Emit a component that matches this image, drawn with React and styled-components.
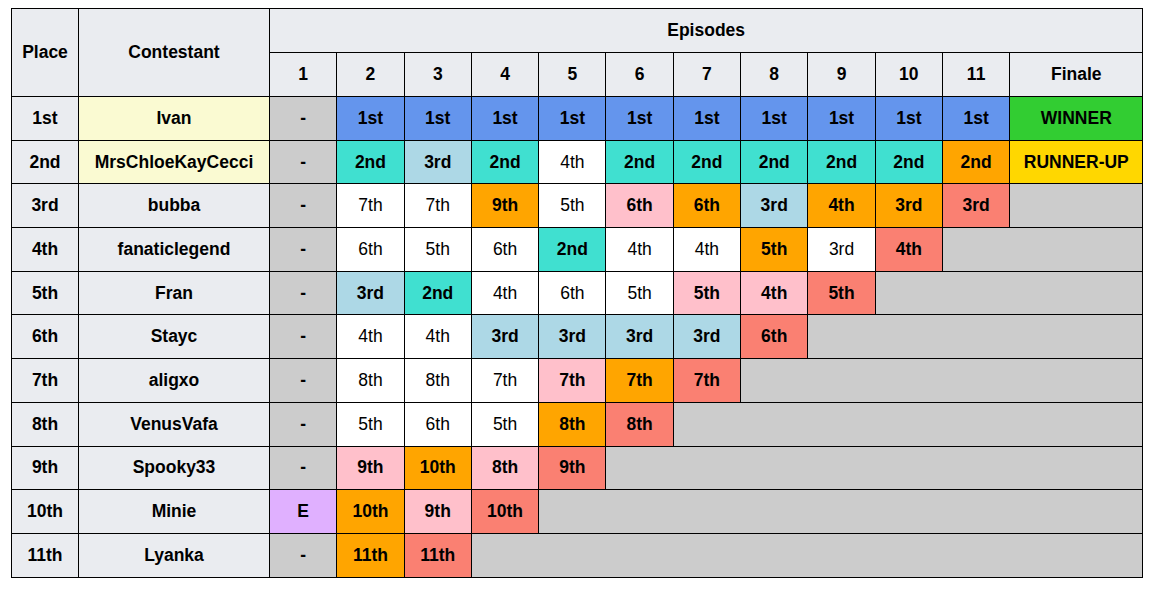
import React from 'react'
import styled, { createGlobalStyle } from 'styled-components'

const colors = {
  H: '#eaecf0',
  G: '#cccccc',
  B: '#6495ed',
  T: '#40e0d0',
  L: '#add8e6',
  O: '#ffa500',
  P: '#ffc0cb',
  S: '#fa8072',
  W: '#ffffff',
  Y: '#fafad2',
  M: '#e0b0ff',
  WIN: '#32cd32',
  RU: '#ffd700'
}

const Global = createGlobalStyle`
  html, body {
    margin: 0;
    background: #fff;
  }
  body {
    padding: 8px 0 0 11px;
    font-family: "Liberation Sans", Arial, sans-serif;
    color: #000;
  }
`

const Table = styled.table`
  border-collapse: collapse;
  table-layout: fixed;
  width: 1131px;
  font-size: 17.5px;
`

const Head = styled.th`
  background: ${colors.H};
  border: 1px solid #000;
  font-weight: bold;
  text-align: center;
  padding: 0;
  height: 43px;
`

const Cell = styled.td`
  background: ${p => colors[p.$c] || '#fff'};
  border: 1px solid #000;
  font-weight: ${p => (p.$c === 'W' ? 'normal' : 'bold')};
  text-align: center;
  padding: 0;
  height: 42.7px;
`

const rows = [
  ['1st', 'Ivan', 'Y', [['-', 'G'], ...Array(10).fill(['1st', 'B']), ['WINNER', 'WIN']]],
  ['2nd', 'MrsChloeKayCecci', 'Y', [['-', 'G'], ['2nd', 'T'], ['3rd', 'L'], ['2nd', 'T'], ['4th', 'W'], ['2nd', 'T'], ['2nd', 'T'], ['2nd', 'T'], ['2nd', 'T'], ['2nd', 'T'], ['2nd', 'O'], ['RUNNER-UP', 'RU']]],
  ['3rd', 'bubba', 'H', [['-', 'G'], ['7th', 'W'], ['7th', 'W'], ['9th', 'O'], ['5th', 'W'], ['6th', 'P'], ['6th', 'O'], ['3rd', 'L'], ['4th', 'O'], ['3rd', 'O'], ['3rd', 'S']]],
  ['4th', 'fanaticlegend', 'H', [['-', 'G'], ['6th', 'W'], ['5th', 'W'], ['6th', 'W'], ['2nd', 'T'], ['4th', 'W'], ['4th', 'W'], ['5th', 'O'], ['3rd', 'W'], ['4th', 'S']]],
  ['5th', 'Fran', 'H', [['-', 'G'], ['3rd', 'L'], ['2nd', 'T'], ['4th', 'W'], ['6th', 'W'], ['5th', 'W'], ['5th', 'P'], ['4th', 'P'], ['5th', 'S']]],
  ['6th', 'Stayc', 'H', [['-', 'G'], ['4th', 'W'], ['4th', 'W'], ['3rd', 'L'], ['3rd', 'L'], ['3rd', 'L'], ['3rd', 'L'], ['6th', 'S']]],
  ['7th', 'aligxo', 'H', [['-', 'G'], ['8th', 'W'], ['8th', 'W'], ['7th', 'W'], ['7th', 'P'], ['7th', 'O'], ['7th', 'S']]],
  ['8th', 'VenusVafa', 'H', [['-', 'G'], ['5th', 'W'], ['6th', 'W'], ['5th', 'W'], ['8th', 'O'], ['8th', 'S']]],
  ['9th', 'Spooky33', 'H', [['-', 'G'], ['9th', 'P'], ['10th', 'O'], ['8th', 'P'], ['9th', 'S']]],
  ['10th', 'Minie', 'H', [['E', 'M'], ['10th', 'O'], ['9th', 'P'], ['10th', 'S']]],
  ['11th', 'Lyanka', 'H', [['-', 'G'], ['11th', 'O'], ['11th', 'S']]]
]

const episodes = Array.from({ length: 11 }, (_, i) => i + 1)

const Row = ({ place, name, tint, results }) => {
  const gap = 12 - results.length
  return (
    <tr>
      <Cell $c='H'>{place}</Cell>
      <Cell $c={tint}>{name}</Cell>
      {results.map(([text, c], i) => <Cell key={i} $c={c}>{text}</Cell>)}
      {gap > 0 && <Cell $c='G' colSpan={gap} />}
    </tr>
  )
}

const App = () =>
  <>
    <Global />
    <Table>
      <colgroup>
        <col style={{ width: 67 }} />
        <col style={{ width: 191 }} />
        {episodes.map(n => <col key={n} style={{ width: 67.3 }} />)}
        <col style={{ width: 133 }} />
      </colgroup>
      <thead>
        <tr>
          <Head rowSpan={2}>Place</Head>
          <Head rowSpan={2}>Contestant</Head>
          <Head colSpan={12}>Episodes</Head>
        </tr>
        <tr>
          {episodes.map(n => <Head key={n}>{n}</Head>)}
          <Head>Finale</Head>
        </tr>
      </thead>
      <tbody>
        {rows.map(([place, name, tint, results]) =>
          <Row key={place} place={place} name={name} tint={tint} results={results} />)}
      </tbody>
    </Table>
  </>

export default App
